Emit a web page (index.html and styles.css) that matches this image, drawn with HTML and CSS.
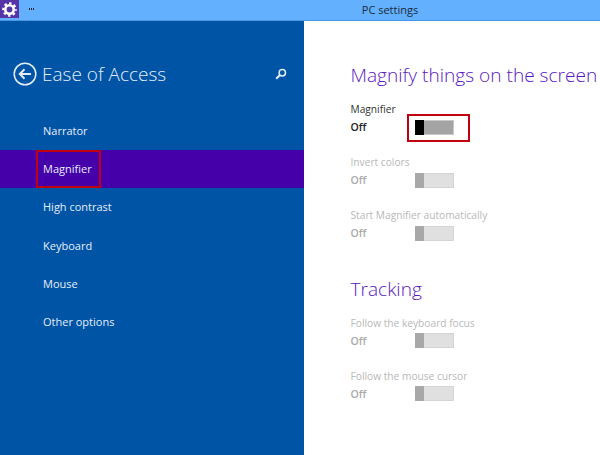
FILE: index.html
```html
<!DOCTYPE html>
<html lang="en">
<head>
<meta charset="utf-8">
<title>PC settings</title>
<link rel="stylesheet" href="styles.css">
</head>
<body>
<div class="window">
  <header class="titlebar">
    <div class="app-icon">
      <svg width="15" height="15" viewBox="0 0 15 15"><circle cx="7.500" cy="7.500" r="4.200" fill="none" stroke="#fff" stroke-width="2.600"/><circle cx="7.500" cy="7.500" r="6.200" fill="none" stroke="#fff" stroke-width="2.200" stroke-dasharray="2.430 2.440" stroke-dashoffset="1.200"/></svg>
    </div>
    <div class="menu-dots"></div>
    <div class="title">PC settings</div>
  </header>
  <div class="main">
    <nav class="sidebar">
      <div class="side-head">
        <svg class="back" width="24" height="24" viewBox="0 0 24 24"><circle cx="12" cy="12" r="10.800" fill="none" stroke="#e4eef8" stroke-width="1.500"/><path d="M18 12H7M11.500 7.300 6.800 12l4.700 4.700" fill="none" stroke="#e4eef8" stroke-width="2"/></svg>
        <h1>Ease of Access</h1>
        <svg class="search" width="12" height="12" viewBox="0 0 12 12"><circle cx="7.300" cy="4.700" r="3.200" fill="none" stroke="#e4eef8" stroke-width="1.500"/><path d="M5 7 1.200 10.800" stroke="#e4eef8" stroke-width="2"/></svg>
      </div>
      <ul class="nav">
        <li>Narrator</li>
        <li class="selected">Magnifier<span class="mark mark-nav"></span></li>
        <li>High contrast</li>
        <li>Keyboard</li>
        <li>Mouse</li>
        <li>Other options</li>
      </ul>
    </nav>
    <section class="content">
      <h2>Magnify things on the screen</h2>
      <div class="setting active">
        <div class="label">Magnifier</div>
        <div class="row"><span class="state">Off</span><span class="toggle"><span class="knob"></span><span class="mark mark-toggle"></span></span></div>
      </div>
      <div class="setting">
        <div class="label">Invert colors</div>
        <div class="row"><span class="state">Off</span><span class="toggle"><span class="knob"></span></span></div>
      </div>
      <div class="setting">
        <div class="label">Start Magnifier automatically</div>
        <div class="row"><span class="state">Off</span><span class="toggle"><span class="knob"></span></span></div>
      </div>
      <h2 class="tracking">Tracking</h2>
      <div class="setting">
        <div class="label">Follow the keyboard focus</div>
        <div class="row"><span class="state">Off</span><span class="toggle"><span class="knob"></span></span></div>
      </div>
      <div class="setting">
        <div class="label">Follow the mouse cursor</div>
        <div class="row"><span class="state">Off</span><span class="toggle"><span class="knob"></span></span></div>
      </div>
    </section>
  </div>
</div>
</body>
</html>
```
FILE: styles.css
```css
* { box-sizing: border-box; margin: 0; padding: 0; }
html, body { width: 600px; height: 455px; overflow: hidden; }
body { font-family: "Open Sans", "Noto Sans", sans-serif; background: #fff; }
.window { width: 600px; height: 455px; display: flex; flex-direction: column; }
.titlebar { height: 21px; flex: none; background: #63b1fe; border-bottom: 1px solid #4b94e0; display: flex; align-items: flex-start; position: relative; }
.app-icon { width: 19px; height: 18px; background: #5733a8; display: flex; align-items: center; justify-content: center; }
.menu-dots { width: 6px; height: 2px; margin: 8px 0 0 10px; background: repeating-linear-gradient(90deg, #222 0 1.500px, #63b1fe 1.500px 2px); }
.title { position: absolute; left: 0; right: 0; top: 2px; text-align: center; font-size: 11px; line-height: 16px; color: #1c2a38; padding-left: 180px; }
.main { flex: 1; display: flex; min-height: 0; }
.sidebar { width: 304px; flex: none; background: #0054a6; color: #e4eef8; }
.side-head { display: flex; align-items: center; padding: 34px 17px 0 13px; height: 72px; }
.back { flex: none; }
.side-head h1 { font-size: 19px; font-weight: 300; line-height: 26px; margin-left: 5px; flex: 1; }
.search { flex: none; }
.nav { list-style: none; margin-top: 19px; }
.nav li { height: 38.200px; line-height: 38px; padding-left: 43px; font-size: 11px; position: relative; }
.nav .selected { background: #4600aa; }
.mark { position: absolute; border: 2px solid #c00010; pointer-events: none; }
.mark-nav { left: 36px; top: 0; width: 65px; height: 38px; }
.content { flex: 1; padding: 41px 0 0 46.500px; min-width: 0; color: #b8b8b8; overflow: hidden; }
h2 { font-size: 19.100px; font-weight: 300; line-height: 26px; color: #5a18c0; white-space: nowrap; }
.setting { height: 53px; }
h2 + .setting { margin-top: 14px; }
.label { font-size: 10.200px; line-height: 14px; }
.row { display: flex; align-items: center; height: 20px; margin-top: 1px; }
.state { width: 64.500px; font-size: 10.500px; font-weight: 600; color: #aaa; }
.toggle { width: 39px; height: 15px; background: #e0e0e0; border: 1px solid #d4d4d4; position: relative; display: block; }
.knob { display: block; width: 9px; height: 15px; margin: -1px 0 0 -1px; background: #a8a8a8; }
.active .label { color: #333; }
.active .state { color: #222; }
.active .toggle { background: #a4a4a4; border-color: #c8c8c8; }
.active .knob { background: #000; }
.mark-toggle { left: -9px; top: -7px; width: 63px; height: 28px; }
.tracking { margin-top: 14.500px; }
```
